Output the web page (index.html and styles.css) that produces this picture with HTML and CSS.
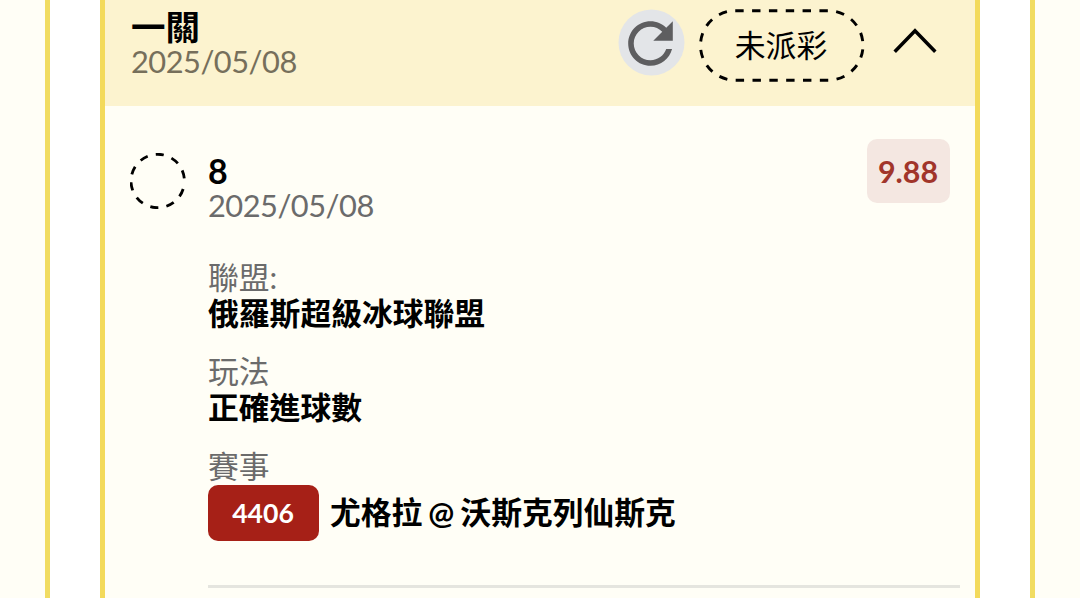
FILE: index.html
```
<!DOCTYPE html>
<html lang="zh-Hant">
<head>
    <meta charset="UTF-8">
    <meta name="viewport" content="width=device-width, initial-scale=1.0">
    <title>投注紀錄</title>
    <link rel="stylesheet" href="styles.css">
</head>
<body>
    <div class="panel">
        <div class="card">
            <div class="card-header">
                <div class="card-title">
                    <h1>一關</h1>
                    <p class="date">2025/05/08</p>
                </div>
                <svg class="refresh" viewBox="0 0 67 67">
                    <circle cx="33.5" cy="33.5" r="33"/>
                    <path transform="translate(-1 1) scale(2.79)" d="M17.65 6.35C16.2 4.9 14.21 4 12 4c-4.42 0-7.99 3.58-7.99 8s3.57 8 7.99 8c3.73 0 6.84-2.55 7.73-6h-2.08c-.82 2.33-3.04 4-5.65 4-3.31 0-6-2.69-6-6s2.69-6 6-6c1.66 0 3.14.69 4.22 1.78L13 11h7V4l-2.35 2.35z"/>
                </svg>
                <div class="status">
                    <svg class="status-outline" viewBox="0 0 166 73">
                        <rect x="1.5" y="1.7" width="162.5" height="69.5" rx="34.75" pathLength="408"/>
                    </svg>
                    <span>未派彩</span>
                </div>
                <svg class="chevron" viewBox="0 0 46 26">
                    <path d="M2.7 23.7L23 2.7l20.3 21"/>
                </svg>
            </div>

            <div class="bet">
                <svg class="bet-mark" viewBox="0 0 56 56">
                    <circle cx="27.7" cy="28" r="26.7"/>
                </svg>
                <div class="bet-body">
                    <div class="bet-top">
                        <div>
                            <h2>8</h2>
                            <p class="date">2025/05/08</p>
                        </div>
                        <span class="odds">9.88</span>
                    </div>
                    <dl class="details">
                        <div class="row">
                            <dt>聯盟:</dt>
                            <dd>俄羅斯超級冰球聯盟</dd>
                        </div>
                        <div class="row">
                            <dt>玩法</dt>
                            <dd>正確進球數</dd>
                        </div>
                        <div class="row">
                            <dt>賽事</dt>
                            <dd class="match"><span class="code">4406</span>尤格拉 @ 沃斯克列仙斯克</dd>
                        </div>
                    </dl>
                    <div class="divider"></div>
                </div>
            </div>
        </div>
    </div>
</body>
</html>
```
FILE: styles.css
```
* {
    box-sizing: border-box;
}

body {
    margin: 0;
    height: 598px;
    overflow: hidden;
    background-color: #fffef6;
    color: #000;
    font-family: Lato, 'Noto Sans CJK TC', sans-serif;
    font-size: 30.8px;
    line-height: 36px;
}

h1, h2, p, dl, dd {
    margin: 0;
}

.panel {
    height: 100%;
    margin: 0 45px;
    padding: 0 50px;
    background-color: #fff;
    border: solid #f1dc61;
    border-width: 0 5px;
}

.card {
    height: 100%;
    background-color: #fffef6;
    border: solid #f3da5c;
    border-width: 0 5px;
}

.card-header {
    display: flex;
    align-items: flex-start;
    height: 106px;
    padding: 9px 37px 0 26px;
    background-color: #fcf3cf;
}

.card-title {
    flex: 1;
}

h1 {
    font-size: 34.5px;
    line-height: 36px;
    font-weight: 700;
}

.date {
    line-height: 34px;
    letter-spacing: -0.5px;
    color: #6b6b6b;
}

.card-header .date {
    color: #766f5b;
}

.refresh {
    width: 67px;
    height: 67px;
    margin-right: 14px;
}

.refresh circle {
    fill: #e3e5e8;
}

.refresh path {
    fill: #5e5e60;
}

.status {
    display: grid;
    place-items: center;
    width: 166px;
    height: 73px;
}

.status > * {
    grid-area: 1 / 1;
}

.status span {
    padding-right: 2px;
}

.status-outline {
    width: 166px;
    height: 73px;
}

.status-outline rect {
    fill: none;
    stroke: #000;
    stroke-width: 2.9;
    stroke-dasharray: 8.5;
}

.chevron {
    width: 46px;
    height: 26px;
    margin: 19px 0 0 27px;
}

.chevron path {
    fill: none;
    stroke: #000;
    stroke-width: 3.5;
}

.bet {
    display: flex;
    gap: 22px;
    padding: 33px 15px 0 25px;
}

.bet-mark {
    width: 56px;
    height: 56px;
    margin-top: 14px;
}

.bet-mark circle {
    fill: none;
    stroke: #000;
    stroke-width: 2.8;
    stroke-dasharray: 8.2;
    stroke-dashoffset: 8.2;
}

.bet-body {
    flex: 1;
}

.bet-top {
    display: flex;
    justify-content: space-between;
    padding-right: 10px;
}

.bet-top > div {
    padding-top: 14px;
}

h2 {
    font-size: 34px;
    line-height: 36px;
    font-weight: 700;
}

.odds {
    width: 83px;
    height: 64px;
    padding-right: 1px;
    border-radius: 10px;
    background-color: #f4e7e1;
    color: #a1352a;
    font-size: 30.4px;
    font-weight: 700;
    line-height: 65px;
    text-align: center;
}

.details {
    display: flex;
    flex-direction: column;
    gap: 22px;
    margin-top: 37px;
}

dt {
    color: #6b6b6b;
}

dd {
    font-weight: 700;
}

.row:last-child {
    padding-top: 1px;
}

.match {
    display: flex;
    align-items: center;
    gap: 11px;
    height: 56px;
    word-spacing: -1.5px;
}

.code {
    width: 111px;
    height: 56px;
    padding-right: 1px;
    border-radius: 10px;
    background-color: #a62017;
    color: #fff;
    font-size: 26.6px;
    line-height: 57px;
    text-align: center;
}

.divider {
    height: 3px;
    margin-top: 44px;
    background-color: #e5e5df;
}
```
